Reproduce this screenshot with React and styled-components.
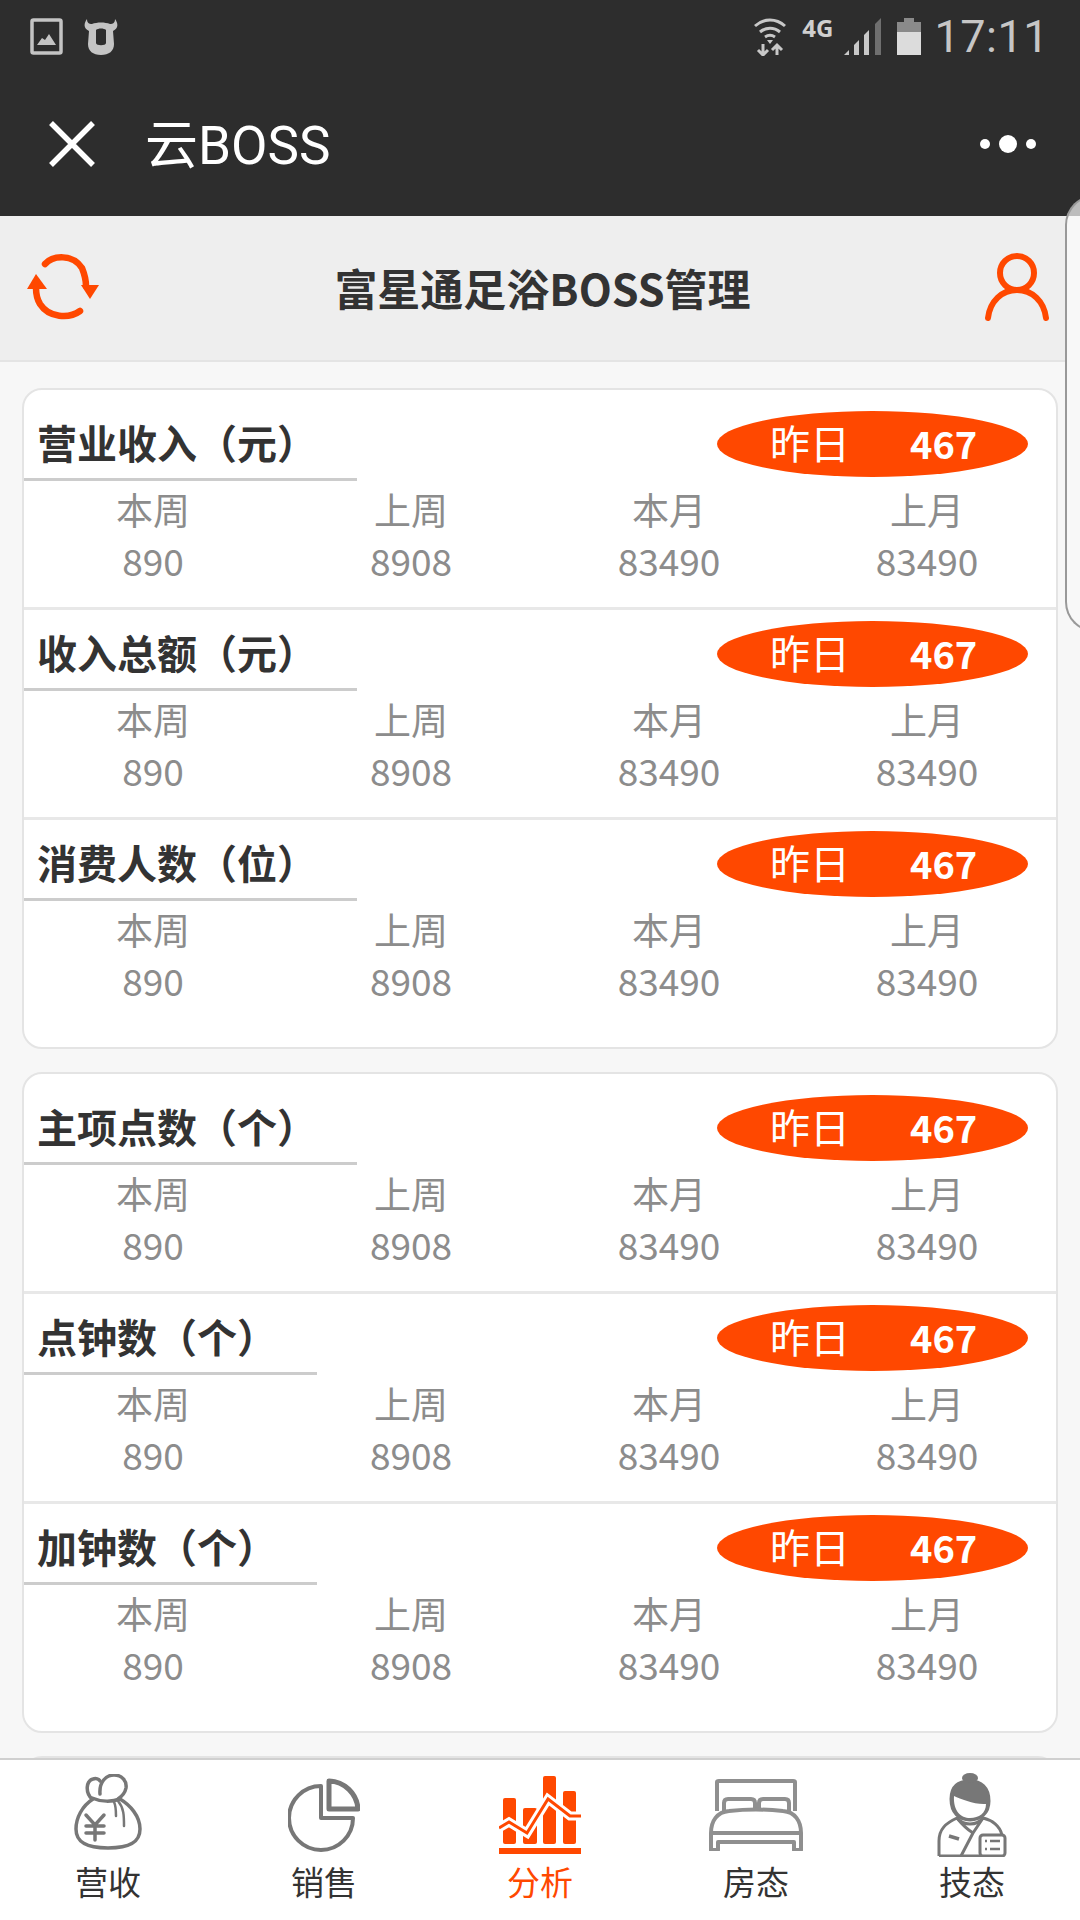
import React from 'react';
import styled, { createGlobalStyle } from 'styled-components';

const ORANGE = '#ff4800';
const FONT = '"Noto Sans CJK SC", "Noto Sans", sans-serif';

const GlobalStyle = createGlobalStyle`
  html, body {
    margin: 0;
    padding: 0;
    background: #f7f7f7;
  }
  * {
    box-sizing: border-box;
  }
`;

const Page = styled.div`
  position: relative;
  display: flex;
  flex-direction: column;
  width: 1080px;
  height: 1920px;
  overflow: hidden;
  font-family: ${FONT};
  background: #f7f7f7;
`;

const StatusBar = styled.div`
  display: flex;
  justify-content: space-between;
  align-items: flex-start;
  height: 72px;
  padding: 18px 31px 0 30px;
  background: #2d2d2d;
`;

const StatusGroup = styled.div`
  display: flex;
  align-items: flex-start;
  gap: ${(p) => p.$gap}px;
`;

const NetLabel = styled.span`
  margin: -6px -4px 0 0;
  font-family: "Noto Sans", sans-serif;
  font-size: 24px;
  line-height: 32px;
  font-weight: 700;
  color: #cfcfcf;
`;

const Clock = styled.span`
  margin: -7px 0 0 -2px;
  font-family: Roboto, sans-serif;
  font-size: 45px;
  line-height: 52px;
  color: #c6c6c6;
  letter-spacing: 0.5px;
`;

const NavBar = styled.div`
  display: flex;
  align-items: center;
  height: 144px;
  padding: 0 42px 0 49px;
  background: #2d2d2d;
`;

const NavTitle = styled.div`
  flex: 1;
  margin: -6px 0 0 50px;
  font-family: Roboto, "Noto Sans CJK SC", sans-serif;
  font-size: 53px;
  color: #fff;
`;

const Header = styled.div`
  display: flex;
  justify-content: space-between;
  align-items: center;
  height: 146px;
  padding: 0 31px 2px 27px;
  background: #eeeeee;
  border-bottom: 2px solid #e4e4e4;
`;

const HeaderTitle = styled.div`
  font-size: 43px;
  font-weight: 700;
  color: #333;
`;

const Content = styled.div`
  flex: 1;
  min-height: 0;
  overflow: hidden;
  padding: 26px 22px 0 22px;
`;

const Card = styled.section`
  height: 661px;
  margin-bottom: 23px;
  background: #fff;
  border: 2px solid #e4e4e4;
  border-radius: 20px;
`;

const Row = styled.div`
  padding: 11px 0 21px;
  border-top: 3px solid #e8e8e8;

  &:first-child {
    padding-top: 21px;
    border-top: 0;
  }
`;

const RowHead = styled.div`
  display: flex;
  justify-content: space-between;
  height: 70px;
  padding-right: 28px;
`;

const RowTitle = styled.h2`
  margin: 0;
  padding: 0 40px 0 13px;
  height: 70px;
  border-bottom: 3px solid #cccccc;
  font-size: 40px;
  line-height: 63px;
  font-weight: 700;
  color: #333;
`;

const Pill = styled.div`
  display: flex;
  align-items: center;
  width: 311px;
  height: 66px;
  padding: 0 0 4px 53px;
  border-radius: 50%;
  background: ${ORANGE};
  color: #fff;
`;

const PillLabel = styled.span`
  width: 140px;
  font-size: 40px;
`;

const PillValue = styled.span`
  font-size: 38px;
  font-weight: 700;
`;

const Stats = styled.div`
  display: grid;
  grid-template-columns: repeat(4, 1fr);
  margin-top: 3px;
  text-align: center;
  color: #8c8c8c;
`;

const StatLine = styled.div`
  font-size: 37px;
  line-height: 51px;
`;

const TabBar = styled.nav`
  display: grid;
  grid-template-columns: repeat(5, 1fr);
  height: 162px;
  background: #fff;
  border-top: 2px solid #d0d0d0;
`;

const Tab = styled.div`
  display: flex;
  flex-direction: column;
  align-items: center;
  color: ${(p) => (p.$active ? ORANGE : '#333')};
`;

const TabIcon = styled.div`
  display: flex;
  justify-content: center;
  align-items: center;
  height: 88px;
  margin-top: 11px;
`;

const TabLabel = styled.div`
  font-size: 33px;
  line-height: 44px;
`;

// the edge of the panel that peeks in from the right
const SidePeek = styled.div`
  position: absolute;
  top: 195px;
  left: 1065px;
  width: 40px;
  height: 437px;
  border: 2px solid #999;
  border-right: 0;
  border-radius: 30px 0 0 30px;
  background: linear-gradient(#bdbdbd 0 19px, #f8f8f8 19px);
`;

const ImageIcon = () => (
  <svg width="33" height="37" viewBox="0 0 33 37">
    <rect x="2" y="2" width="29" height="33" rx="1.5" fill="none" stroke="#c4c4c4" strokeWidth="3.5" />
    <path d="M7 27 L12 20 L15 22 L19 16 L26 27 Z" fill="#c4c4c4" />
  </svg>
);

const CowIcon = () => (
  <svg width="36" height="37" viewBox="0 0 36 37">
    <path
      d="M4 1 C4 5 6 6 9 6 C14 4 22 4 27 6 C30 6 32 5 32 1 C35 5 36 10 30 13 L31 26 C31 33 26 37 18 37 C10 37 5 33 5 26 L6 13 C0 10 1 5 4 1 Z"
      fill="#c4c4c4"
    />
    <path d="M13 12 C15 10 21 10 23 12 L23 25 C23 28 13 28 13 25 Z" fill="#2d2d2d" />
  </svg>
);

const WifiIcon = () => (
  <svg width="34" height="38" viewBox="0 0 34 38" fill="none" stroke="#c8c8c8">
    <path d="M2 8 C11 0 23 0 32 8" strokeWidth="3" />
    <path d="M7 14 C13 9 21 9 27 14" strokeWidth="3" />
    <path d="M12 19 C15 17 19 17 22 19" strokeWidth="3" />
    <path d="M14 22 H20 L17 26 Z" fill="#c8c8c8" stroke="none" />
    <path d="M10 26 V37 M5 32 L10 37 L15 32" strokeWidth="3" />
    <path d="M24 37 V27 M19 32 L24 27 L29 32" strokeWidth="3" />
  </svg>
);

const SignalIcon = () => (
  <svg width="38" height="37" viewBox="0 0 38 37">
    <path d="M0 37 L5 32 V37 Z" fill="#c8c8c8" />
    <path d="M10 37 V27 L15 22 V37 Z" fill="#c8c8c8" />
    <path d="M20 37 V17 L25 12 V37 Z" fill="#c8c8c8" />
    <path d="M31 37 V6 L37 0 V37 Z" fill="#6f6f6f" />
  </svg>
);

const BatteryIcon = () => (
  <svg width="24" height="37" viewBox="0 0 24 37">
    <path d="M7 0 H17 V4 H24 V14 H0 V4 H7 Z" fill="#8a8a8a" />
    <rect x="0" y="14" width="24" height="23" fill="#dcdcdc" />
  </svg>
);

const CloseIcon = () => (
  <svg width="46" height="46" viewBox="0 0 46 46">
    <path d="M2 2 L44 44 M44 2 L2 44" stroke="#fff" strokeWidth="5.5" fill="none" />
  </svg>
);

const DotsIcon = () => (
  <svg width="58" height="18" viewBox="0 0 58 18">
    <circle cx="5" cy="9" r="5" fill="#fff" />
    <circle cx="28" cy="9" r="9" fill="#fff" />
    <circle cx="51" cy="9" r="5" fill="#fff" />
  </svg>
);

const RefreshIcon = () => (
  <svg width="73" height="66" viewBox="0 0 73 66" fill="none">
    <path d="M18 10 C26 1 46 0 55 14 C57 19 59 24 59 32" stroke={ORANGE} strokeWidth="6.5" strokeLinecap="round" />
    <path d="M54 31 H72 L63 45 Z" fill={ORANGE} />
    <path d="M53 57 C42 65 22 64 13 50 C10 45 9 40 9 34" stroke={ORANGE} strokeWidth="6.5" strokeLinecap="round" />
    <path d="M0 35 L9 20 L20 35 Z" fill={ORANGE} />
  </svg>
);

const UserIcon = () => (
  <svg width="64" height="68" viewBox="0 0 64 68" fill="none" stroke={ORANGE} strokeWidth="6" strokeLinecap="round">
    <circle cx="32" cy="20" r="17" />
    <path d="M3 65 C5 48 17 37 32 37 C47 37 59 48 61 65" />
  </svg>
);

const BagIcon = () => (
  <svg width="68" height="82" viewBox="0 0 68 82" fill="none" stroke="#777" strokeWidth="3.5" strokeLinecap="round">
    <path d="M19 25 C8 32 2 44 2 55 C2 68 12 74 34 74 C56 74 66 68 66 55 C66 42 56 31 46 25" />
    <path d="M18 25 C11 18 12 7 19 5 C22 4 25 5 26 7" />
    <path d="M26 20 C25 8 32 1 40 1 C48 1 53 7 52 14 C51 19 47 23 44 25" />
    <path d="M18 24 C27 28 38 28 46 25" />
    <path d="M40 28 C42 32 42 36 42 42" strokeWidth="2.5" />
    <path d="M44 27 C50 34 50 42 50 52" strokeWidth="2.5" />
    <path d="M12 41 L21 51 L30 41 M12 52 H30 M12 59 H30 M21 51 V66" />
  </svg>
);

const PieIcon = () => (
  <svg width="72" height="74" viewBox="0 0 72 74" fill="none" stroke="#777" strokeLinejoin="round">
    <path d="M33 8 A32 32 0 1 0 65 40 H33 Z" strokeWidth="4" />
    <path d="M41 3 V31 H70 A30 30 0 0 0 41 3 Z" strokeWidth="5" />
  </svg>
);

const ChartIcon = () => (
  <svg width="82" height="78" viewBox="0 0 82 78" fill="none">
    <rect x="4" y="22" width="13" height="46" rx="2" fill={ORANGE} />
    <rect x="24" y="32" width="14" height="36" rx="2" fill={ORANGE} />
    <rect x="44" y="0" width="13" height="68" rx="2" fill={ORANGE} />
    <rect x="64" y="15" width="13" height="53" rx="2" fill={ORANGE} />
    <rect x="0" y="72" width="82" height="6" fill={ORANGE} />
    <path d="M0 52 L10 46 L28 57 L49 23 L71 40 H82" stroke="#fff" strokeWidth="9" />
    <path d="M0 52 L10 46 L28 57 L49 23 L71 40 H82" stroke={ORANGE} strokeWidth="3" />
  </svg>
);

const BedIcon = () => (
  <svg width="94" height="72" viewBox="0 0 94 72" fill="none" stroke="#8f8f8f" strokeWidth="4" strokeLinejoin="round">
    <path d="M8 32 V3 C8 2 9 2 10 2 H84 C85 2 86 2 86 3 V32" />
    <path d="M15 32 V24 C15 21 17 20 19 20 H42 C45 20 46 22 46 24 V31" />
    <path d="M50 31 V24 C50 22 51 20 54 20 H76 C78 20 80 21 80 24 V32" />
    <path d="M2 54 C2 42 8 33 20 32 C38 30 56 30 74 32 C86 33 92 42 92 54 Z" />
    <path d="M2 54 V71 H9 V63 H85 V71 H92 V54" />
  </svg>
);

const WorkerIcon = () => (
  <svg width="70" height="84" viewBox="0 0 70 84" fill="none" stroke="#777" strokeWidth="3">
    <ellipse cx="33" cy="5" rx="8" ry="5" fill="#777" stroke="none" />
    <path d="M14 26 C14 12 22 8 33 8 C44 8 52 14 52 28 C52 40 44 47 33 47 C22 47 14 40 14 26 Z" fill="#777" />
    <path d="M17 23 C24 26 38 32 49 31 C49 40 42 45 33 45 C24 45 16 38 17 23 Z" fill="#fff" stroke="none" />
    <path d="M2 83 V68 C2 56 9 50 20 45 C26 53 40 53 46 45 C55 47 63 53 65 62" />
    <path d="M20 45 C24 50 28 55 36 60 L24 83 M46 45 L36 60" />
    <path d="M2 83 H44" />
    <path d="M12 63 L22 66" strokeWidth="3.5" />
    <rect x="43" y="62" width="25" height="21" rx="3" fill="#fff" />
    <path d="M48 68 H50 M53 68 H63 M48 76 H50 M53 76 H63" strokeWidth="2.5" />
  </svg>
);

const PERIODS = [
  { label: '本周', value: 890 },
  { label: '上周', value: 8908 },
  { label: '本月', value: 83490 },
  { label: '上月', value: 83490 }
];

const CARDS = [
  ['营业收入（元）', '收入总额（元）', '消费人数（位）'],
  ['主项点数（个）', '点钟数（个）', '加钟数（个）'],
  []
];

const TABS = [
  { label: '营收', Icon: BagIcon },
  { label: '销售', Icon: PieIcon },
  { label: '分析', Icon: ChartIcon, active: true },
  { label: '房态', Icon: BedIcon },
  { label: '技态', Icon: WorkerIcon }
];

const MetricRow = ({ title }) => (
  <Row>
    <RowHead>
      <RowTitle>{title}</RowTitle>
      <Pill>
        <PillLabel>昨日</PillLabel>
        <PillValue>467</PillValue>
      </Pill>
    </RowHead>
    <Stats>
      {PERIODS.map((period) => (
        <div key={period.label}>
          <StatLine>{period.label}</StatLine>
          <StatLine>{period.value}</StatLine>
        </div>
      ))}
    </Stats>
  </Row>
);

export default function App() {
  return (
    <Page>
      <GlobalStyle />
      <StatusBar>
        <StatusGroup $gap={20}>
          <ImageIcon />
          <CowIcon />
        </StatusGroup>
        <StatusGroup $gap={15}>
          <WifiIcon />
          <NetLabel>4G</NetLabel>
          <SignalIcon />
          <BatteryIcon />
          <Clock>17:11</Clock>
        </StatusGroup>
      </StatusBar>
      <NavBar>
        <CloseIcon />
        <NavTitle>云BOSS</NavTitle>
        <DotsIcon />
      </NavBar>
      <Header>
        <RefreshIcon />
        <HeaderTitle>富星通足浴BOSS管理</HeaderTitle>
        <UserIcon />
      </Header>
      <Content>
        {CARDS.map((titles, i) => (
          <Card key={i}>
            {titles.map((title) => (
              <MetricRow key={title} title={title} />
            ))}
          </Card>
        ))}
      </Content>
      <TabBar>
        {TABS.map(({ label, Icon, active }) => (
          <Tab key={label} $active={active}>
            <TabIcon>
              <Icon />
            </TabIcon>
            <TabLabel>{label}</TabLabel>
          </Tab>
        ))}
      </TabBar>
      <SidePeek />
    </Page>
  );
}
